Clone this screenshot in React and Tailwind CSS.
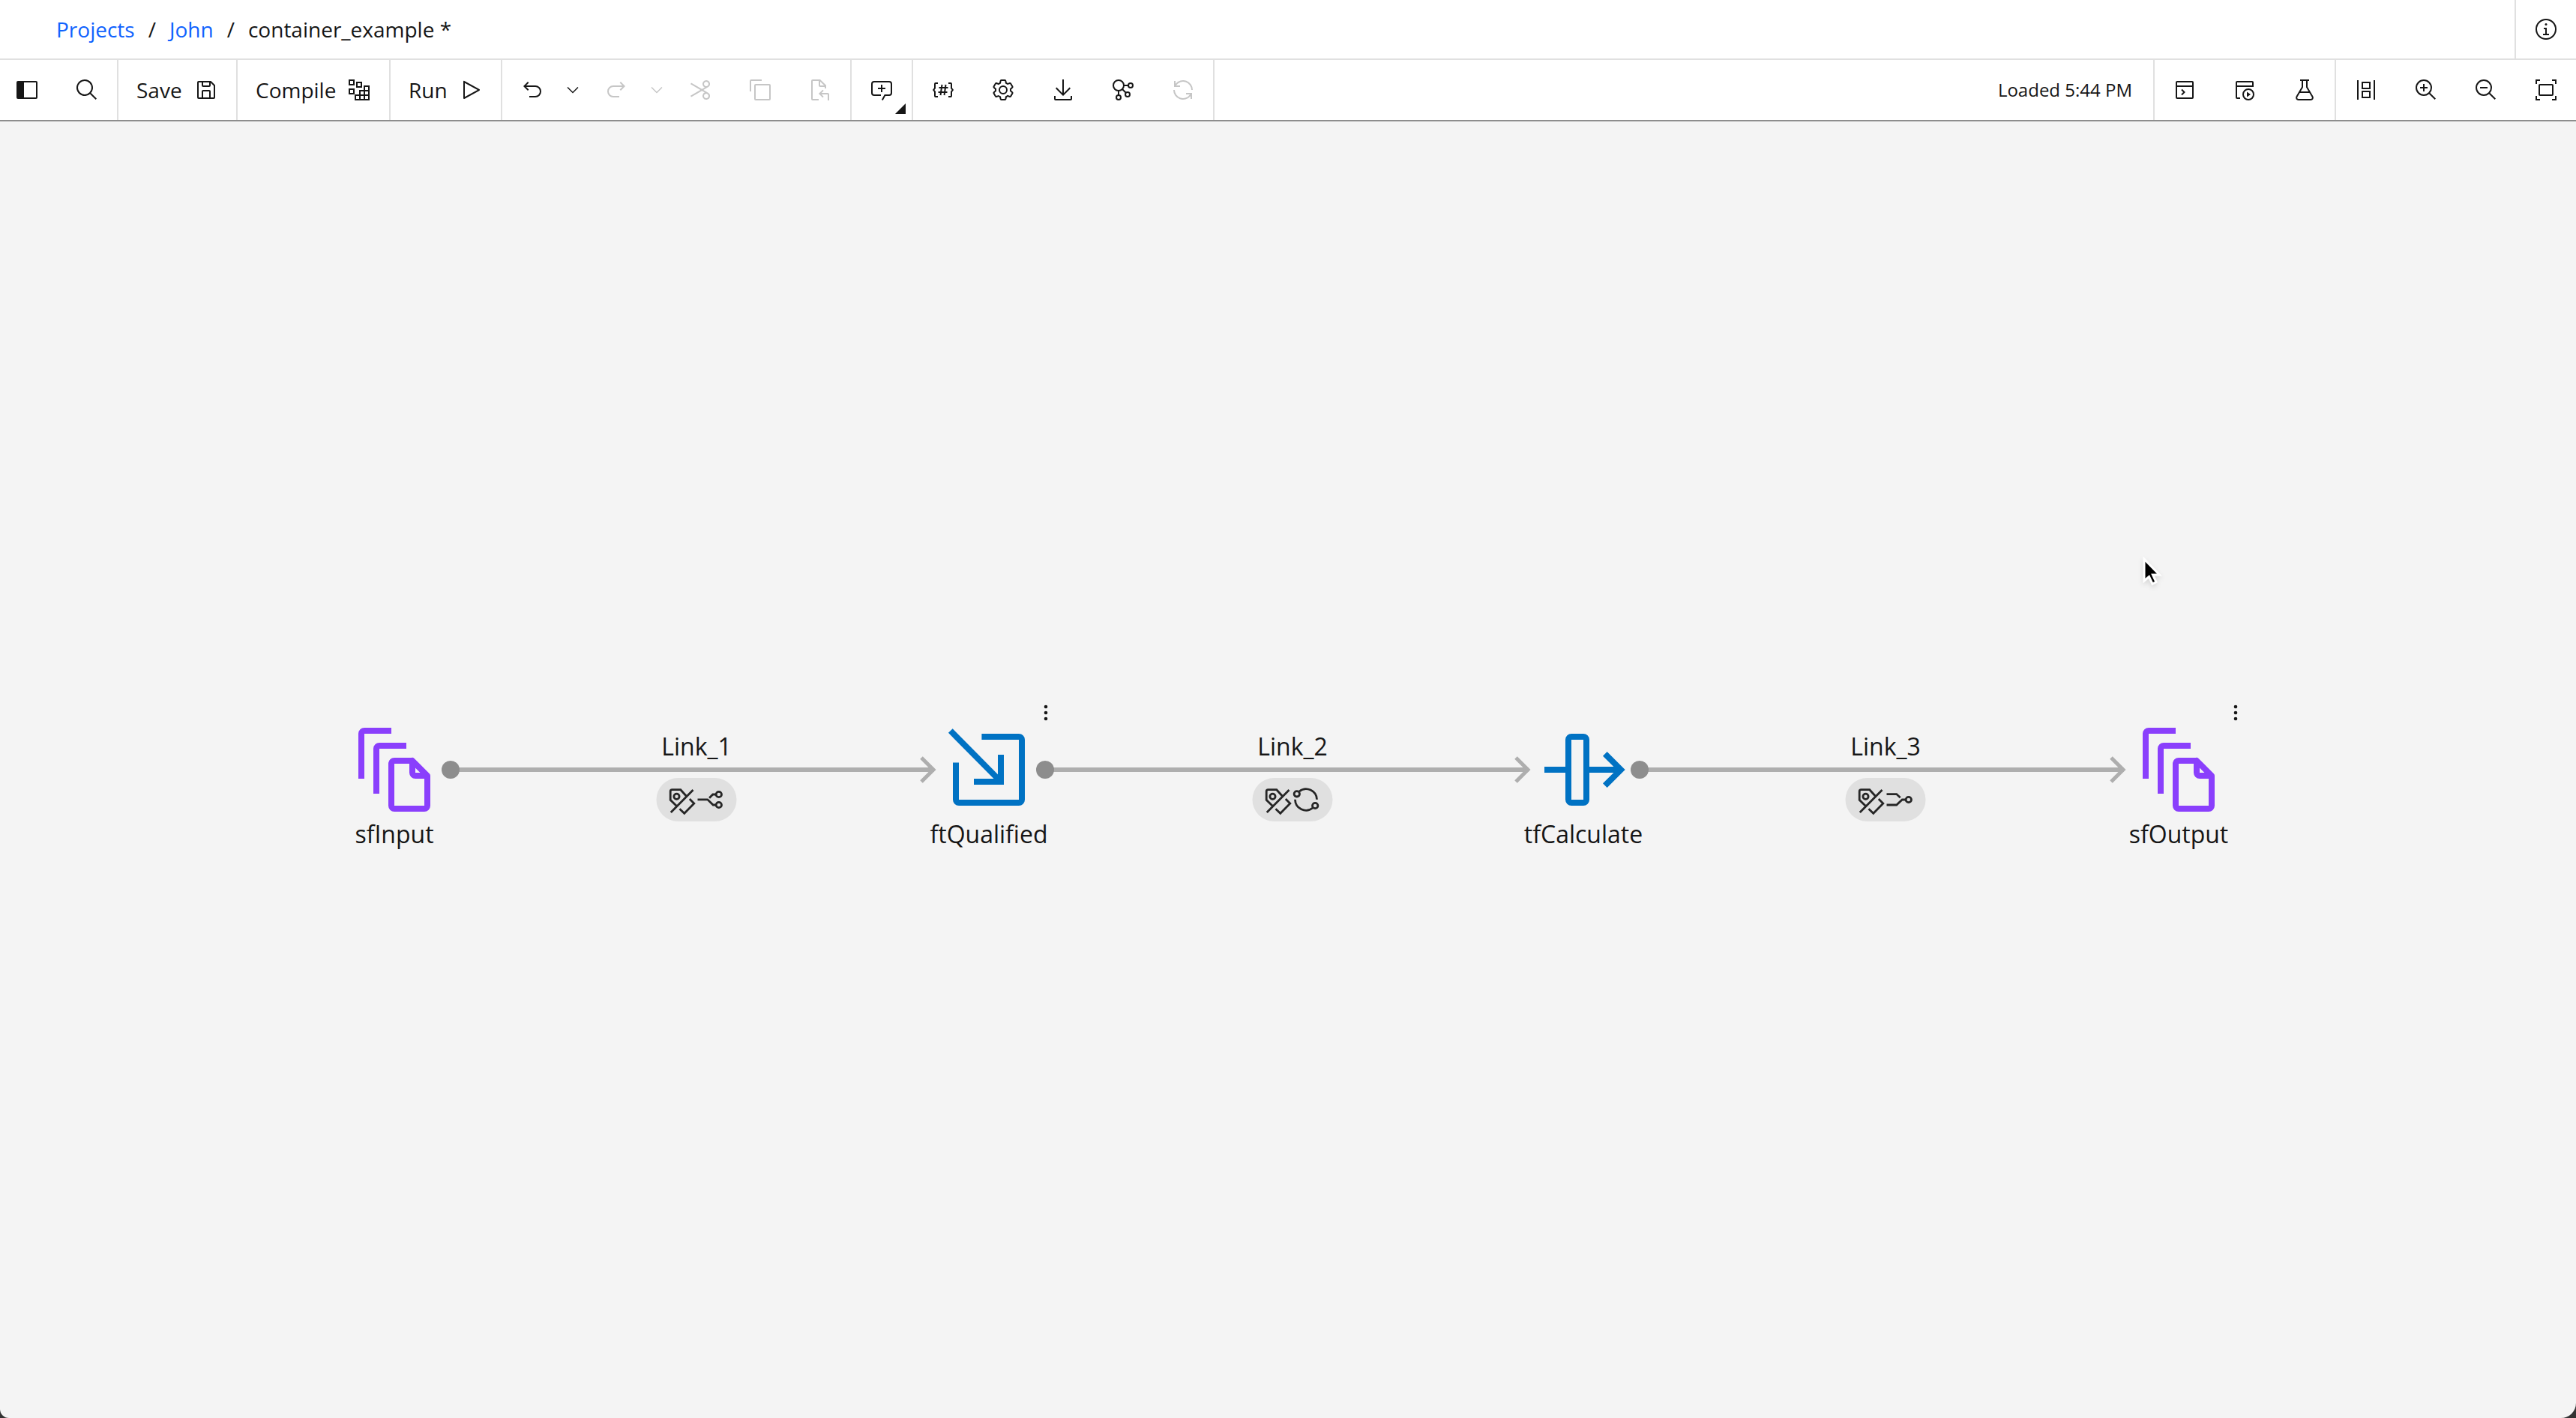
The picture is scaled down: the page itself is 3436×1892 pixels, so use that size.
import React from "react";

const ICONS = {
  panel: <path d="M28 4H4a2 2 0 0 0-2 2v20a2 2 0 0 0 2 2h24a2 2 0 0 0 2-2V6a2 2 0 0 0-2-2Zm0 22H12V6h16Z" />,
  search: <path d="M29 27.586l-7.552-7.552a11.018 11.018 0 1 0-1.414 1.414L27.586 29ZM4 13a9 9 0 1 1 9 9 9.01 9.01 0 0 1-9-9Z" />,
  save: <path d="M27.71 9.29l-5-5A1 1 0 0 0 22 4H6a2 2 0 0 0-2 2v20a2 2 0 0 0 2 2h20a2 2 0 0 0 2-2V10a1 1 0 0 0-.29-.71ZM12 6h8v4h-8Zm8 20h-8v-8h8Zm2 0v-8a2 2 0 0 0-2-2h-8a2 2 0 0 0-2 2v8H6V6h4v4a2 2 0 0 0 2 2h8a2 2 0 0 0 2-2V6.41l4 4V26Z" />,
  compile: (
    <g fill="none" stroke="currentColor" strokeWidth="2">
      <path d="M3 3h6v6H3zM13 6h6v6h-6zM3 15h6v6H3zM23 11h6v6h-6zM17 17h6v6h-6zM23 17h6v6h-6zM11 23h6v6h-6zM17 23h6v6h-6zM23 23h6v6h-6z" />
    </g>
  ),
  run: <path d="M7 28a1 1 0 0 1-1-1V5a1 1 0 0 1 1.482-.876l20 11a1 1 0 0 1 0 1.752l-20 11A1 1 0 0 1 7 28ZM8 6.691v18.618L24.925 16Z" />,
  undo: <path d="M20 10H7.815l3.587-3.586L10 5l-6 6 6 6 1.402-1.415L7.818 12H20a6 6 0 0 1 0 12h-8v2h8a8 8 0 0 0 0-16Z" />,
  redo: <path d="M12 10h12.185l-3.587-3.586L22 5l6 6-6 6-1.402-1.415L24.182 12H12a6 6 0 0 0 0 12h8v2h-8a8 8 0 0 1 0-16Z" />,
  chevron: <path d="M16 22 6 12l1.4-1.4 8.6 8.6 8.6-8.6L26 12z" />,
  cut: <path d="M26.5 19.63 20.24 16l6.26-3.63a5 5 0 0 0-1.21-9.2A5.19 5.19 0 0 0 24 3a5 5 0 0 0-4.33 7.53 5 5 0 0 0 2.39 2.1l-3.82 2.21L4 6.6 3 8.34 16.24 16 3 23.68l1 1.74 14.24-8.26 3.82 2.21a5 5 0 0 0-2.39 2.1A5 5 0 0 0 24 29a5.19 5.19 0 0 0 1.29-.17 5 5 0 0 0 1.21-9.2ZM21.4 9.5A3 3 0 1 1 24 11a3 3 0 0 1-2.6-1.5ZM24 27a3 3 0 1 1 2.6-1.5A3 3 0 0 1 24 27Z" />,
  copy: <path d="M28 10v18H10V10h18m0-2H10a2 2 0 0 0-2 2v18a2 2 0 0 0 2 2h18a2 2 0 0 0 2-2V10a2 2 0 0 0-2-2ZM4 18H2V4a2 2 0 0 1 2-2h14v2H4Z" />,
  paste: (
    <g fill="none" stroke="currentColor" strokeWidth="2">
      <path d="M14 29H6a1 1 0 0 1-1-1V4a1 1 0 0 1 1-1h9.6L23 10.2V14M15 3v7a1 1 0 0 0 1 1h7" />
      <path d="M27 30v-8a1 1 0 0 0-1-1H16M20 16.4 15.4 21l4.6 4.6" />
    </g>
  ),
  comment: (
    <g fill="none" stroke="currentColor" strokeWidth="2">
      <path d="M15 23H6a3 3 0 0 1-3-3V8a3 3 0 0 1 3-3h20a3 3 0 0 1 3 3v12a3 3 0 0 1-3 3h-5.6l-3.6 6.5M16 9v10M11 14h10" />
    </g>
  ),
  params: (
    <g fill="none" stroke="currentColor" strokeWidth="2">
      <path d="M9 7H6a1 1 0 0 0-1 1v5.6L3.2 16 5 18.4V24a1 1 0 0 0 1 1h3M23 7h3a1 1 0 0 1 1 1v5.6l1.8 2.4-1.8 2.4V24a1 1 0 0 1-1 1h-3" />
      <path d="M14.5 9l-2 14M19.5 9l-2 14M10.5 13h12M9.5 19h12" />
    </g>
  ),
  settings: (
    <>
      <path d="M27 16.76c0-.25 0-.5 0-.76s0-.51 0-.77l1.92-1.68A2 2 0 0 0 29.3 11L26.94 7a2 2 0 0 0-1.73-1 2 2 0 0 0-.64.1l-2.43.82a11.35 11.35 0 0 0-1.31-.75l-.51-2.52a2 2 0 0 0-2-1.61h-4.68a2 2 0 0 0-2 1.61l-.51 2.52a11.48 11.48 0 0 0-1.32.75l-2.38-.86A2 2 0 0 0 6.79 6 2 2 0 0 0 5.06 7L2.7 11a2 2 0 0 0 .41 2.51L5 15.24c0 .25 0 .5 0 .76s0 .51 0 .77l-1.89 1.68A2 2 0 0 0 2.7 21l2.36 4a2 2 0 0 0 1.73 1 2 2 0 0 0 .64-.1l2.43-.82a11.35 11.35 0 0 0 1.31.75l.51 2.52a2 2 0 0 0 2 1.61h4.72a2 2 0 0 0 2-1.61l.51-2.52a11.48 11.48 0 0 0 1.32-.75l2.42.82a2 2 0 0 0 .64.1 2 2 0 0 0 1.73-1l2.28-4a2 2 0 0 0-.41-2.51ZM25.21 24l-3.43-1.16a8.86 8.86 0 0 1-2.71 1.57L18.36 28h-4.72l-.71-3.55a9.36 9.36 0 0 1-2.7-1.57L6.79 24l-2.36-4 2.72-2.4a8.9 8.9 0 0 1 0-3.13L4.43 12l2.36-4 3.43 1.16a8.86 8.86 0 0 1 2.71-1.57L13.64 4h4.72l.71 3.55a9.36 9.36 0 0 1 2.7 1.57L25.21 8l2.36 4-2.72 2.4a8.9 8.9 0 0 1 0 3.13L27.57 20Z" />
      <circle cx="16" cy="16" r="5" fill="none" stroke="currentColor" strokeWidth="2" />
    </>
  ),
  download: <path d="M26 24v4H6v-4H4v4a2 2 0 0 0 2 2h20a2 2 0 0 0 2-2v-4ZM26 14l-1.41-1.41L17 20.17V2h-2v18.17L7.41 12.59 6 14l10 10Z" />,
  network: (
    <g fill="none" stroke="currentColor" strokeWidth="2">
      <circle cx="10" cy="10" r="7" />
      <circle cx="26" cy="10" r="3" />
      <circle cx="10" cy="26" r="3" />
      <circle cx="22" cy="22" r="3" />
      <path d="M17 10h6M10 17v6M15 15l5 5" />
    </g>
  ),
  renew: <path d="M12 10H6.78A11 11 0 0 1 27 16h2A13 13 0 0 0 6 7.68V4H4v8h8ZM20 22h5.22A11 11 0 0 1 5 16H3a13 13 0 0 0 23 8.32V28h2v-8h-8Z" />,
  terminal: (
    <g fill="none" stroke="currentColor" strokeWidth="2">
      <rect x="5" y="5" width="22" height="22" rx="1" />
      <path d="M5 11h22M12 15.5l3.5 3.5-3.5 3.5" />
    </g>
  ),
  jobRun: (
    <>
      <g fill="none" stroke="currentColor" strokeWidth="2">
        <path d="M10 27H6a1 1 0 0 1-1-1V6a1 1 0 0 1 1-1h20a1 1 0 0 1 1 1v5H5" />
        <circle cx="21" cy="22" r="7" />
      </g>
      <path d="M19 18.5v7l5-3.5z" />
    </>
  ),
  flask: (
    <g fill="none" stroke="currentColor" strokeWidth="2">
      <path d="M10 3h12M13 3v9.3L5.5 25a2.65 2.65 0 0 0 2.3 4h16.4a2.65 2.65 0 0 0 2.3-4L19 12.3V3M9 19h14" />
    </g>
  ),
  arrange: (
    <g fill="none" stroke="currentColor" strokeWidth="2">
      <path d="M5 3v26M27 3v26" />
      <rect x="11" y="6" width="10" height="8" />
      <rect x="11" y="18" width="10" height="8" />
    </g>
  ),
  zoomIn: <path d="M18 12h-4V8h-2v4H8v2h4v4h2v-4h4ZM21.45 20A10.86 10.86 0 0 0 24 13a11 11 0 1 0-11 11 10.86 10.86 0 0 0 7-2.55L27.59 29 29 27.59ZM13 22a9 9 0 1 1 9-9 9 9 0 0 1-9 9Z" />,
  zoomOut: <path d="M8 12h10v2H8ZM21.45 20A10.86 10.86 0 0 0 24 13a11 11 0 1 0-11 11 10.86 10.86 0 0 0 7-2.55L27.59 29 29 27.59ZM13 22a9 9 0 1 1 9-9 9 9 0 0 1-9 9Z" />,
  fit: <path d="M8 2H2v6h2V4h4ZM24 2h6v6h-2V4h-4ZM8 30H2v-6h2v4h4ZM24 30h6v-6h-2v4h-4ZM24 24H8a2 2 0 0 1-2-2V10a2 2 0 0 1 2-2h16a2 2 0 0 1 2 2v12a2 2 0 0 1-2 2ZM8 10v12h16V10Z" />,
  info: (
    <>
      <circle cx="16" cy="16" r="13" fill="none" stroke="currentColor" strokeWidth="2" />
      <path d="M17 22v-8h-4v2h2v6h-3v2h8v-2Z" />
      <circle cx="16" cy="9.5" r="1.5" />
    </>
  ),
  dots: (
    <>
      <circle cx="16" cy="8" r="2.3" />
      <circle cx="16" cy="16" r="2.3" />
      <circle cx="16" cy="24" r="2.3" />
    </>
  ),
};

const STAGES = {
  file: (
    <path d="M5 19V4a1 1 0 0 1 1-1h9M10 24V9a1 1 0 0 1 1-1h9M22 13h-6a1 1 0 0 0-1 1v14a1 1 0 0 0 1 1h10a1 1 0 0 0 1-1V18l-5-5v4a1 1 0 0 0 1 1h4" strokeLinejoin="round" />
  ),
  filter: (
    <path d="M13.6 5H26a1 1 0 0 1 1 1v20a1 1 0 0 1-1 1H6a1 1 0 0 1-1-1V13.6M3.2 3 20 20M11 20h9v-9" />
  ),
  transform: (
    <>
      <rect x="11" y="5" width="6" height="22" rx="1" />
      <path d="M3 16h7M18 16h10M23.2 10.7 28.5 16l-5.3 5.3" />
    </>
  ),
};

const LINK_GLYPHS = {
  tag: (
    <>
      <path d="M23 15.3 15.3 6.7H4a2.3 2.3 0 0 0-2.3 2.3v11.3l8.6 8.4M2.3 37 32 7M27.3 19l6 6-13 13.3-6.3-6" />
      <circle cx="10" cy="15.7" r="3.6" />
    </>
  ),
  fork: (
    <>
      <path d="M1 19.8h13.3l7.4 7.2h3.6M25.3 13h-4l-4.7 4.7" />
      <circle cx="29.3" cy="27" r="3.7" />
      <circle cx="29.3" cy="13" r="3.7" />
    </>
  ),
  cycle: (
    <>
      <path d="M8.5 9A14.4 14.4 0 0 1 32 19.7M3 19.7A14.5 14.5 0 0 0 26.5 31" />
      <circle cx="5.3" cy="12.3" r="3.7" />
      <circle cx="29.7" cy="28" r="3.7" />
    </>
  ),
  merge: (
    <>
      <path d="M1 12.6h13.2l5 4.7M1 27h13.2l7.5-7h4.5" />
      <circle cx="30.3" cy="20" r="3.7" />
    </>
  ),
};

function Icon({ name, className = "size-8" }) {
  return (
    <svg viewBox="0 0 32 32" fill="currentColor" className={className} aria-hidden="true">
      {ICONS[name]}
    </svg>
  );
}

function ToolButton({ icon, label, disabled, small }) {
  return (
    <button
      type="button"
      aria-label={label}
      disabled={disabled}
      className={`flex h-20 items-center justify-center disabled:text-[#c6c6c6] ${small ? "w-7" : "w-20"}`}
    >
      <Icon name={icon} className={small ? "size-6" : "size-8"} />
    </button>
  );
}

function LabelButton({ icon, children, className }) {
  return (
    <button
      type="button"
      className={`flex h-20 items-center justify-between border-r-2 border-[#e0e0e0] px-6 ${className}`}
    >
      {children}
      <Icon name={icon} />
    </button>
  );
}

const Group = ({ children, className = "border-r-2" }) => (
  <div className={`flex border-[#e0e0e0] ${className}`}>{children}</div>
);

const NODES = [
  { label: "sfInput", x: 526, stage: "file", color: "text-[#8a3ffc]" },
  { label: "ftQualified", x: 1319, stage: "filter", color: "text-[#0072c3]", menu: true },
  { label: "tfCalculate", x: 2112, stage: "transform", color: "text-[#0072c3]" },
  { label: "sfOutput", x: 2906, stage: "file", color: "text-[#8a3ffc]", menu: true },
];

const LINKS = [
  { label: "Link_1", x: 929, from: 526, to: 1319, glyph: "fork" },
  { label: "Link_2", x: 1724, from: 1319, to: 2112, glyph: "cycle" },
  { label: "Link_3", x: 2515, from: 2112, to: 2906, glyph: "merge" },
];

const LINE_Y = 865;

function LinkGlyph({ name }) {
  return (
    <svg viewBox="0 0 36 40" fill="none" stroke="currentColor" strokeWidth="2.8" className="h-10 w-9 overflow-visible" aria-hidden="true">
      {LINK_GLYPHS[name]}
    </svg>
  );
}

function Canvas() {
  return (
    <main className="relative flex-1 overflow-hidden rounded-br-[20px] rounded-bl-[12px] bg-[#f4f4f4]">
      <svg className="absolute inset-0 size-full" aria-hidden="true">
        {LINKS.map((l) => (
          <g key={l.label} fill="none" stroke="#aeaeae">
            <path d={`M${l.from + 75} ${LINE_Y}H${l.to - 73}`} strokeWidth="6" />
            <path d={`M${l.to - 90} ${LINE_Y - 16}l16 16-16 16`} strokeWidth="5" />
            <circle cx={l.from + 75} cy={LINE_Y} r="12" fill="#8d8d8d" stroke="none" />
          </g>
        ))}
      </svg>

      {NODES.map((n) => (
        <div
          key={n.label}
          className="absolute top-[801px] flex w-64 -translate-x-1/2 flex-col items-center gap-0.5"
          style={{ left: n.x }}
        >
          <svg viewBox="0 0 32 32" fill="none" stroke="currentColor" strokeWidth="2" className={`size-32 ${n.color}`} aria-hidden="true">
            {STAGES[n.stage]}
          </svg>
          <span className="text-[32px] leading-10">{n.label}</span>
          {n.menu && (
            <button type="button" aria-label={`${n.label} actions`} className="absolute -top-7 right-9">
              <Icon name="dots" />
            </button>
          )}
        </div>
      ))}

      {LINKS.map((l) => (
        <div
          key={l.label}
          className="absolute top-[814px] flex -translate-x-1/2 flex-col items-center gap-[22px]"
          style={{ left: l.x }}
        >
          <span className="text-[32px] leading-10">{l.label}</span>
          <span className="flex h-[58px] w-[107px] items-center justify-center gap-px rounded-full bg-[#e0e0e0] text-[#262626]">
            <LinkGlyph name="tag" />
            <LinkGlyph name={l.glyph} />
          </span>
        </div>
      ))}

      <svg viewBox="0 0 28 40" className="absolute top-[580px] left-[2856px] h-10 w-7 drop-shadow-md" aria-hidden="true">
        <path d="M4 4v29l6.5-5.5 4.5 9.5 5-2.5-4.5-9.500h9z" fill="#000" stroke="#fff" strokeWidth="3" />
      </svg>
    </main>
  );
}

export default function App() {
  return (
    <div className="flex min-h-screen flex-col bg-[#333333] font-['Open_Sans','Noto_Sans',sans-serif] text-[28px] leading-9 text-[#161616]">
      <header className="flex h-20 items-stretch justify-between border-b-2 border-[#e0e0e0] bg-white">
        <nav aria-label="Breadcrumb" className="flex items-center gap-[18px] pl-[75px]">
          <a href="#projects" className="text-[#0f62fe]">Projects</a>
          <span>/</span>
          <a href="#john" className="text-[#0f62fe]">John</a>
          <span>/</span>
          <span>container_example *</span>
        </nav>
        <button type="button" aria-label="Information" className="flex w-[82px] items-center justify-center border-l-2 border-[#e0e0e0]">
          <Icon name="info" />
        </button>
      </header>

      <div role="toolbar" aria-label="Canvas toolbar" className="flex justify-between border-b-2 border-[#8d8d8d] bg-white">
        <div className="flex">
          <Group className="items-center gap-12 border-r-2 pr-6 pl-5">
            <button type="button" aria-label="Toggle palette"><Icon name="panel" /></button>
            <button type="button" aria-label="Search"><Icon name="search" /></button>
          </Group>
          <LabelButton icon="save" className="w-[159px]">Save</LabelButton>
          <LabelButton icon="compile" className="w-[204px]">Compile</LabelButton>
          <LabelButton icon="run" className="w-[149px]">Run</LabelButton>
          <Group className="gap-1 border-r-2">
            <div className="flex">
              <ToolButton icon="undo" label="Undo" />
              <ToolButton icon="chevron" label="Undo history" small />
            </div>
            <div className="flex">
              <ToolButton icon="redo" label="Redo" disabled />
              <ToolButton icon="chevron" label="Redo history" disabled small />
            </div>
            <div className="flex">
              <ToolButton icon="cut" label="Cut" disabled />
              <ToolButton icon="copy" label="Copy" disabled />
              <ToolButton icon="paste" label="Paste" disabled />
            </div>
          </Group>
          <Group className="relative border-r-2">
            <ToolButton icon="comment" label="Add comment" />
            <svg viewBox="0 0 14 14" className="pointer-events-none absolute right-2 bottom-2 size-3.5" aria-hidden="true">
              <path d="M14 0v14H0z" fill="currentColor" />
            </svg>
          </Group>
          <Group>
            <ToolButton icon="params" label="Parameters" />
            <ToolButton icon="settings" label="Settings" />
            <ToolButton icon="download" label="Download" />
            <ToolButton icon="network" label="Lineage" />
            <ToolButton icon="renew" label="Refresh" disabled />
          </Group>
        </div>

        <div className="flex items-center">
          <span className="pr-7 text-2xl">Loaded 5:44 PM</span>
          <Group className="border-x-2">
            <ToolButton icon="terminal" label="Logs" />
            <ToolButton icon="jobRun" label="Job runs" />
            <ToolButton icon="flask" label="Test cases" />
          </Group>
          <Group className="">
            <ToolButton icon="arrange" label="Arrange" />
            <ToolButton icon="zoomIn" label="Zoom in" />
            <ToolButton icon="zoomOut" label="Zoom out" />
            <ToolButton icon="fit" label="Fit to screen" />
          </Group>
        </div>
      </div>

      <Canvas />
    </div>
  );
}
